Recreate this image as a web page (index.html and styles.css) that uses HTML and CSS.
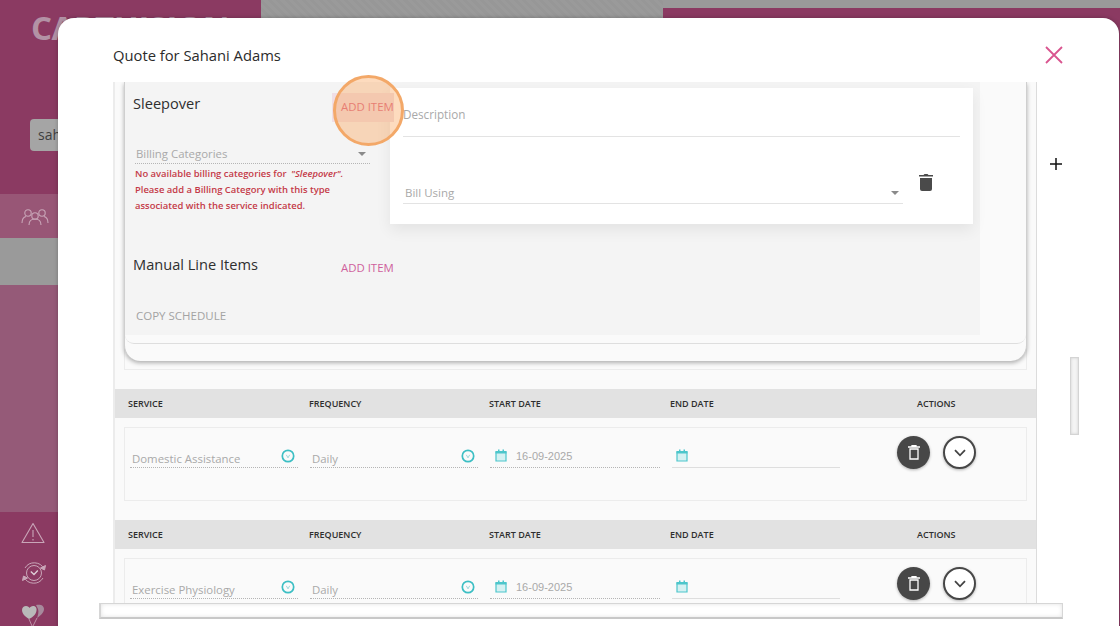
FILE: index.html
```html
<!DOCTYPE html>
<html lang="en">
<head>
<meta charset="utf-8">
<title>Quote for Sahani Adams</title>
<link rel="stylesheet" href="styles.css">
</head>
<body>
<div class="backdrop">
  <aside class="sidebar">
    <div class="logo">CARTHISION</div>
    <div class="search">sahani</div>
    <div class="menu-item">
      <svg class="side-icon" width="28" height="18" viewBox="0 0 28 18" fill="none" stroke="#c9a6b8" stroke-width="1.1">
        <circle cx="7" cy="5" r="3.2"/><circle cx="14" cy="8" r="3.2"/><circle cx="21" cy="5" r="3.2"/>
        <path d="M1 15c0-4 2-6 4-6.500M27 15c0-4-2-6-4-6.500M8 17c0-4 2.500-6 6-6s6 2 6 6"/>
      </svg>
    </div>
    <div class="menu-active"></div>
    <div class="menu-fill"></div>
    <div class="side-foot">
      <svg class="foot-alert" width="24" height="22" viewBox="0 0 24 22" fill="none" stroke="#c9a6b8" stroke-width="1.1">
        <path d="M12 1.500 23 20.500H1Z" stroke-linejoin="round"/><path d="M12 8v7M12 17v1.500"/>
      </svg>
      <svg class="foot-clock" width="26" height="26" viewBox="0 0 26 26" fill="none" stroke="#c9a6b8" stroke-width="1">
        <circle cx="13" cy="13" r="7.500"/><path d="M9.800 11.500 13 14.500 16.800 10.500" stroke="#e0d0d8" stroke-width="1.300"/>
        <path d="M4 8A10.800 10.800 0 0 1 23 9"/><path d="M22 18A10.800 10.800 0 0 1 3 17"/>
        <path d="M24.500 5.500 23.500 10 19.500 8ZM1.500 20.500 2.500 16 6.500 18Z" fill="#c9a6b8"/>
      </svg>
      <svg class="foot-heart" width="24" height="24" viewBox="0 0 24 24" fill="#b9b9b9" stroke="none">
        <path d="M8 17C4 14.500 1 11.500 1 8 1 5.500 3 4 5 4s3 1 3.500 2C9 5 10.500 4 12 4c2.500 0 4 2 3.500 4.500C15 12.500 12 15 8 17Z"/>
        <path d="M15 3c4-1 8 0 8 4 0 4-4 7-7 9 1-3 2-6 1-9Z" fill="#a78a9c"/>
        <path d="M8 17 11 24M16 16 12 24" fill="none" stroke="#c9a6b8" stroke-width=".8"/>
      </svg>
    </div>
  </aside>
  <main class="page">
    <div class="page-top"></div>
    <div class="page-band"></div>
  </main>
</div>

<section class="modal">
  <header class="modal-head">
    <h1 class="modal-title">Quote for Sahani Adams</h1>
    <svg class="close" width="18" height="18" viewBox="0 0 18 18" fill="none" stroke="#d9548f" stroke-width="1.8"><path d="M1 1 17 17M17 1 1 17"/></svg>
  </header>
  <div class="modal-body">
    <div class="scroll">
      <div class="open-row">
        <div class="card">
          <div class="panel">
            <div class="left">
              <div class="section-head top-head">
                <h2 class="section-title">Sleepover</h2>
                <span class="add-item highlighted">ADD ITEM</span>
              </div>
              <div class="select dotted"><span>Billing Categories</span><i class="caret"></i></div>
              <p class="error">No available billing categories for <em>"Sleepover".</em><br>Please add a Billing Category with this type<br>associated with the service indicated.</p>
              <div class="section-head manual">
                <h2 class="section-title">Manual Line Items</h2>
                <span class="add-item">ADD ITEM</span>
              </div>
              <div class="copy">COPY SCHEDULE</div>
            </div>
            <div class="white-panel">
              <div class="desc">Description</div>
              <div class="bill-row">
                <div class="bill"><span>Bill Using</span><i class="caret"></i></div>
                <svg class="bin" width="14" height="18" viewBox="0 0 14 18" fill="#4a4a4a"><path d="M1 5h12v11a2 2 0 0 1-2 2H3a2 2 0 0 1-2-2Z"/><path d="M0 2h4.500l1-1h3l1 1H14v1.500H0Z"/></svg>
              </div>
            </div>
          </div>
          <div class="card-rule"></div>
        </div>
      </div>

      <div class="service">
        <div class="table-head"><span>SERVICE</span><span>FREQUENCY</span><span>START DATE</span><span>END DATE</span><span class="act">ACTIONS</span></div>
        <div class="row-box">
          <div class="field f-service"><span>Domestic Assistance</span><svg class="v" width="14" height="14" viewBox="0 0 14 14" fill="none"><circle cx="7" cy="7" r="5.700" stroke="#3dbfc4" stroke-width="1.700"/><path d="M5.300 5.800 7 8.800 8.700 5.800" stroke="#8fd3d6" stroke-width=".9"/></svg></div>
          <div class="field f-freq"><span>Daily</span><svg class="v" width="14" height="14" viewBox="0 0 14 14" fill="none"><circle cx="7" cy="7" r="5.700" stroke="#3dbfc4" stroke-width="1.700"/><path d="M5.300 5.800 7 8.800 8.700 5.800" stroke="#8fd3d6" stroke-width=".9"/></svg></div>
          <div class="field f-date"><svg class="cal" width="12" height="13" viewBox="0 0 12 13"><path d="M1 3h10v9H1Z" fill="#d4f1f2" stroke="#4cc6cb" stroke-width="1.200"/><path d="M.5 2h11v2.500H.5ZM3 .5h1.500V2H3ZM7.500.5H9V2H7.500Z" fill="#4cc6cb"/></svg><span class="date">16-09-2025</span></div>
          <div class="field f-end"><svg class="cal" width="12" height="13" viewBox="0 0 12 13"><path d="M1 3h10v9H1Z" fill="#d4f1f2" stroke="#4cc6cb" stroke-width="1.200"/><path d="M.5 2h11v2.500H.5ZM3 .5h1.500V2H3ZM7.500.5H9V2H7.500Z" fill="#4cc6cb"/></svg></div>
          <div class="actions">
            <button class="round dark"><svg width="12" height="15" viewBox="0 0 12 15" fill="none" stroke="#fff" stroke-width="1.300"><path d="M2 4h8v10H2ZM0 2h12M4 1.500V.7h4v.8" /></svg></button>
            <button class="round light"><svg width="12" height="8" viewBox="0 0 12 8" fill="none" stroke="#444" stroke-width="1.800"><path d="M1 1.200 6 6.300 11 1.200"/></svg></button>
          </div>
        </div>
      </div>

      <div class="service">
        <div class="table-head"><span>SERVICE</span><span>FREQUENCY</span><span>START DATE</span><span>END DATE</span><span class="act">ACTIONS</span></div>
        <div class="row-box">
          <div class="field f-service"><span>Exercise Physiology</span><svg class="v" width="14" height="14" viewBox="0 0 14 14" fill="none"><circle cx="7" cy="7" r="5.700" stroke="#3dbfc4" stroke-width="1.700"/><path d="M5.300 5.800 7 8.800 8.700 5.800" stroke="#8fd3d6" stroke-width=".9"/></svg></div>
          <div class="field f-freq"><span>Daily</span><svg class="v" width="14" height="14" viewBox="0 0 14 14" fill="none"><circle cx="7" cy="7" r="5.700" stroke="#3dbfc4" stroke-width="1.700"/><path d="M5.300 5.800 7 8.800 8.700 5.800" stroke="#8fd3d6" stroke-width=".9"/></svg></div>
          <div class="field f-date"><svg class="cal" width="12" height="13" viewBox="0 0 12 13"><path d="M1 3h10v9H1Z" fill="#d4f1f2" stroke="#4cc6cb" stroke-width="1.200"/><path d="M.5 2h11v2.500H.5ZM3 .5h1.500V2H3ZM7.500.5H9V2H7.500Z" fill="#4cc6cb"/></svg><span class="date">16-09-2025</span></div>
          <div class="field f-end"><svg class="cal" width="12" height="13" viewBox="0 0 12 13"><path d="M1 3h10v9H1Z" fill="#d4f1f2" stroke="#4cc6cb" stroke-width="1.200"/><path d="M.5 2h11v2.500H.5ZM3 .5h1.500V2H3ZM7.500.5H9V2H7.500Z" fill="#4cc6cb"/></svg></div>
          <div class="actions">
            <button class="round dark"><svg width="12" height="15" viewBox="0 0 12 15" fill="none" stroke="#fff" stroke-width="1.300"><path d="M2 4h8v10H2ZM0 2h12M4 1.500V.7h4v.8" /></svg></button>
            <button class="round light"><svg width="12" height="8" viewBox="0 0 12 8" fill="none" stroke="#444" stroke-width="1.800"><path d="M1 1.200 6 6.300 11 1.200"/></svg></button>
          </div>
        </div>
      </div>
    </div>
    <div class="side-col">
      <svg class="plus" width="12" height="12" viewBox="0 0 12 12" stroke="#111" stroke-width="1.500"><path d="M6 0v12M0 6h12"/></svg>
    </div>
  </div>
</section>

<div class="hscroll"></div>
<div class="vscroll"></div>
<div class="spot"></div>
</body>
</html>
```
FILE: styles.css
```css
* { box-sizing: border-box; }
html, body { margin: 0; height: 100%; overflow: hidden; }
body { font-family: "Open Sans", "Noto Sans", sans-serif; background: #8b3a62; }

/* dimmed page behind the dialog */
.backdrop { display: flex; height: 626px; width: 1120px; }
.sidebar { width: 261px; background: #8b3a62; display: flex; flex-direction: column; flex: none; }
.logo { height: 44px; margin-bottom: 75px; padding: 12px 0 0 31px; font-size: 33px; font-weight: 700; line-height: 32px; letter-spacing: -.5px; color: #b392a5; white-space: nowrap; overflow: hidden; }
.search { margin-left: 30px; width: 120px; height: 32px; margin-bottom: 43px; padding-left: 8px; background: #a5a5a5; border-radius: 4px; font-size: 14px; line-height: 32px; color: #3f3f3f; }
.menu-item { height: 44px; background: #985676; padding: 14px 0 0 21px; }
.side-icon { display: block; }
.menu-active { height: 47px; background: #9a9a9a; }
.menu-fill { height: 228px; background: #955a78; }
.side-foot { flex: 1; display: flex; flex-direction: column; align-items: flex-start; gap: 16px; padding: 10px 0 0 21px; }
.side-foot svg { display: block; flex: none; }
.page { flex: 1; display: flex; flex-direction: row; background: #9a9a9a; }
.page-top { width: 402px; background: #999 repeating-linear-gradient(45deg, #9a9a9a 0 3px, #979797 3px 6px); }
.page-band { flex: 1; margin-top: 8px; background: #8b3a62; }

/* dialog */
.modal { position: absolute; left: 58px; top: 18px; width: 1061px; height: 640px; background: #fff; border-radius: 16px; display: flex; flex-direction: column; box-shadow: 0 0 4px rgba(0,0,0,.25); }
.modal-head { height: 64px; flex: none; display: flex; align-items: center; justify-content: space-between; padding: 9px 56px 0 55px; }
.modal-title { margin: 0; font-size: 14.75px; font-weight: 400; color: #2b2b2b; line-height: 20px; }
.close { display: block; margin-top: 1px; }
.modal-body { flex: 1; display: flex; min-height: 0; }

.scroll { margin-left: 55px; width: 924px; flex: none; height: 521px; overflow: hidden; background: #fafafa; border-left: 2px solid #ececec; border-right: 1px solid #dcdcdc; }
.side-col { flex: 1; padding: 76px 0 0 13px; }
.plus { display: block; }

.open-row { margin: 0 9px; height: 288px; border: 1px solid #ececec; border-top: 0; }
.card { height: 279px; margin: 0 -1px; background: #fafafa; border-radius: 0 0 16px 16px; border-left: 1px solid #cfcfcf; border-right: 1px solid #cfcfcf; box-shadow: 0 2px 4px rgba(0,0,0,.3); }
.panel { width: 855px; height: 253px; background: #f4f4f4; display: flex; }
.card-rule { height: 9px; border-bottom: 1px solid #dedede; border-radius: 0 0 12px 12px; }
.left { width: 265px; flex: none; padding: 0 0 0 8px; display: flex; flex-direction: column; }
.section-head { display: flex; align-items: flex-start; height: 40px; }
.top-head { position: relative; z-index: 1; }
.section-title { margin: 11px 0 0; width: 208px; flex: none; font-size: 14.6px; font-weight: 400; line-height: 20px; color: #2f2f2f; white-space: nowrap; }
.add-item { font-size: 11.4px; line-height: 16px; color: #cf5f9c; white-space: nowrap; }
.section-head .add-item { margin-top: 17px; }
.section-head .highlighted { margin: 11px 0 0 -9px; padding: 6px 0 7px 9px; background: #f0dee5; color: #d9607f; flex: none; }
.select { height: 42px; margin: 0 0 0 2px; width: 235px; padding: 24px 0 0 1px; font-size: 11.4px; line-height: 15px; color: #a9a9a9; display: flex; justify-content: space-between; }
.dotted { border-bottom: 1px dotted #b5b5b5; }
.caret { display: block; width: 0; height: 0; border: 4px solid transparent; border-top: 4px solid #8a8a8a; border-bottom: 0; margin: 6px 4px 0 0; }
.error { margin: 2px 0 0 2px; font-size: 9.45px; line-height: 16px; font-weight: 600; color: #c43a48; white-space: nowrap; }
.error em { font-weight: 600; padding-left: 2px; }
.manual { margin-top: 29px; }
.copy { margin: 25px 0 0 3px; font-size: 11.5px; line-height: 16px; color: #a3a3a3; }
.white-panel { width: 583px; height: 136px; margin-top: 6px; background: #fff; padding: 0 13px; box-shadow: 0 6px 14px rgba(0,0,0,.07); }
.desc { height: 49px; padding-top: 18px; font-size: 11.7px; line-height: 16px; color: #a9a9a9; border-bottom: 1px solid #e3e3e3; }
.bill-row { display: flex; align-items: flex-start; }
.bill { width: 500px; height: 67px; padding-top: 48px; font-size: 11.5px; line-height: 16px; color: #a9a9a9; border-bottom: 1px solid #e3e3e3; display: flex; justify-content: space-between; padding-left: 2px; }
.bin { margin: 36px 0 0 16px; display: block; }

.service { margin-top: 19px; }
.table-head { height: 29px; background: #e2e2e2; display: grid; grid-template-columns: 181px 180px 181px 247px auto; padding-left: 13px; font-size: 9px; font-weight: 600; line-height: 29px; color: #2e2e2e; white-space: nowrap; }
.row-box { margin: 9px 9px 0; height: 74px; border: 1px solid #ececec; background: #fafafa; display: grid; grid-template-columns: 168px 168px 170px 168px auto; column-gap: 12px; padding: 0 0 0 5px; align-items: start; }
.field { height: 40px; display: flex; justify-content: space-between; align-items: flex-start; font-size: 11.4px; color: #a9a9a9; border-bottom: 1px dotted #b5b5b5; }
.field > span { padding: 23px 0 0 2px; line-height: 16px; }
.field .v { margin: 21px 3px 0 0; display: block; }
.f-date, .f-end { justify-content: flex-start; }
.f-end { border-bottom: 1px solid #dedede; }
.cal { margin: 21px 0 0 5px; display: block; flex: none; }
.f-end .cal { margin-left: 4px; }
.field > .date { padding: 20px 0 0 9px; font-family: "Liberation Sans", Arial, sans-serif; font-size: 11px; }
.actions { display: flex; gap: 13px; padding: 8px 0 0 45px; }
.round { width: 33px; height: 33px; padding: 0; border-radius: 50%; display: flex; align-items: center; justify-content: center; box-shadow: 0 1px 3px rgba(0,0,0,.3); }
.dark { background: #474747; border: 0; }
.light { background: #fff; border: 2px solid #474747; }

.hscroll { position: absolute; left: 99px; top: 603px; width: 964px; height: 16px; background: #fff; border: 1px solid #d6d6d6; border-left-width: 2px; border-bottom: 2px solid #c8c8c8; box-shadow: inset 0 0 4px rgba(0,0,0,.12); }
.vscroll { position: absolute; left: 1070px; top: 357px; width: 9px; height: 78px; background: #f4f4f4; border: 1px solid #d4d4d4; box-shadow: inset 0 0 3px rgba(0,0,0,.15); }
.spot { position: absolute; z-index: 2; left: 333px; top: 75px; width: 71px; height: 71px; border-radius: 50%; background: rgba(251,170,100,.42); border: 3px solid #f3a868; }
```
